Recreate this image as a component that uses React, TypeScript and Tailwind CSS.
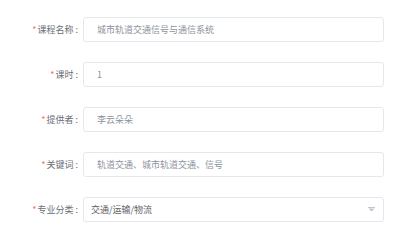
const fields = [
  { label: "课程名称", value: "城市轨道交通信号与通信系统" },
  { label: "课时", value: "1" },
  { label: "提供者", value: "李云朵朵" },
  { label: "关键词", value: "轨道交通、城市轨道交通、信号" },
];

const Label = ({ text }: { text: string }) => (
  <label className="w-[83px] shrink-0 pr-[5px] text-right text-[9px] text-[#6b6e75]">
    <span className="text-[#f56c6c] mr-[1px]">*</span>
    {text}
    <span className="ml-[2px]">:</span>
  </label>
);

export default function App() {
  return (
    <div
      className="w-[400px] h-[240px] bg-white pt-[17px] flex flex-col gap-[20px]"
      style={{ fontFamily: '"Noto Sans CJK SC", "Noto Sans", sans-serif' }}
    >
      {fields.map((f) => (
        <div key={f.label} className="flex items-center">
          <Label text={f.label} />
          <div className="w-[301px] h-[25px] border border-[#e4e7ed] rounded-[3px] flex items-center pl-[13px] text-[9px] text-[#8c939d]">
            {f.value}
          </div>
        </div>
      ))}
      <div className="flex items-center">
        <Label text="专业分类" />
        <div className="w-[301px] h-[25px] border border-[#e4e7ed] rounded-[3px] flex items-center justify-between pl-[7px] pr-[6px] text-[9px] text-[#606266]">
          <span>交通/运输/物流</span>
          <svg width="7" height="5" viewBox="0 0 7 5" className="mr-[2px]">
            <rect x="0" y="0" width="7" height="1" fill="#c0c4cc" />
            <path d="M0.5 1.5 H6.5 L3.5 4.5 Z" fill="#c0c4cc" />
          </svg>
        </div>
      </div>
    </div>
  );
}
